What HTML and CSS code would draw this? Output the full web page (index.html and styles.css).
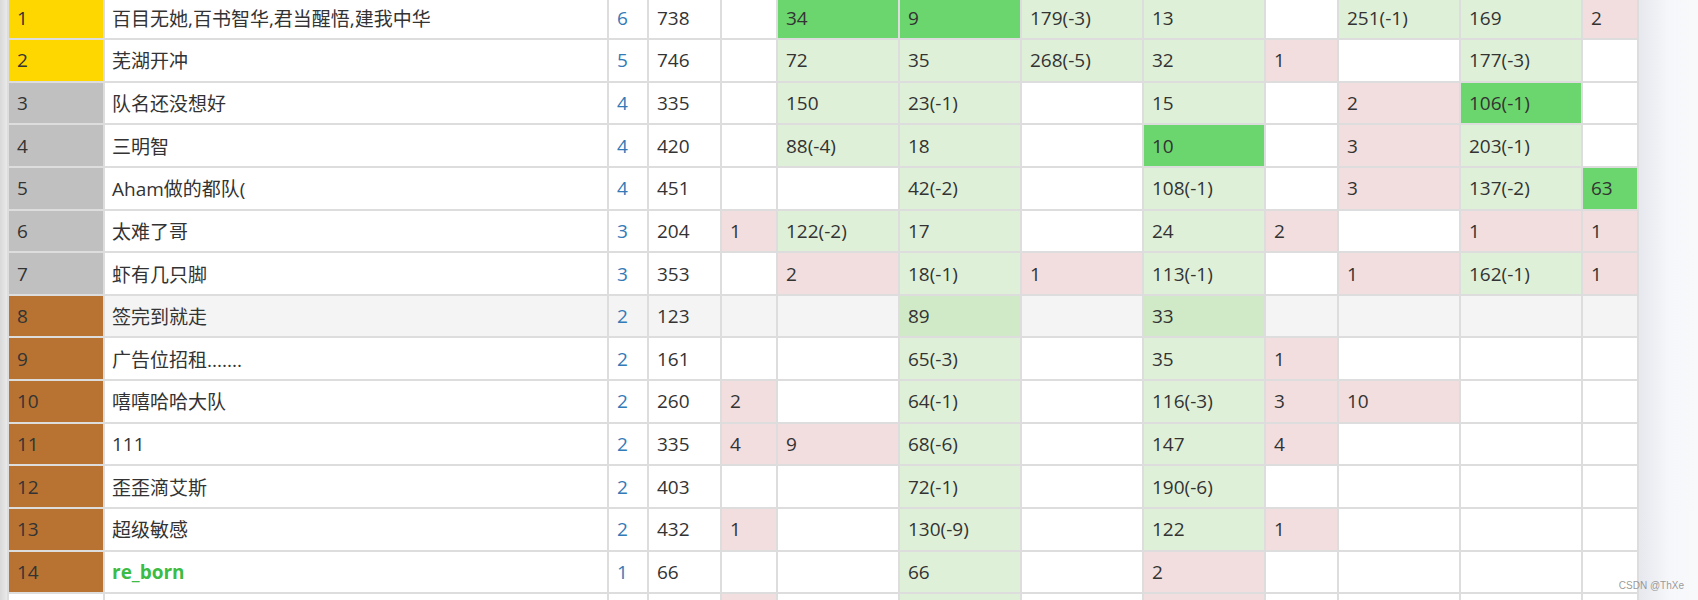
FILE: index.html
```html
<!DOCTYPE html>
<html lang="zh-CN">
<head>
<meta charset="utf-8">
<title>排行榜</title>
<link rel="stylesheet" href="styles.css">
</head>
<body>
<div class="page">
  <div class="board">
    <div class="row">
      <div class="cell gold">1</div><div class="cell name">百目无她,百书智华,君当醒悟,建我中华</div><div class="cell cnt">6</div><div class="cell">738</div>
      <div class="cell"></div><div class="cell fb">34</div><div class="cell fb">9</div><div class="cell ok">179(-3)</div><div class="cell ok">13</div><div class="cell"></div><div class="cell ok">251(-1)</div><div class="cell ok">169</div><div class="cell bad">2</div>
    </div>
    <div class="row">
      <div class="cell gold">2</div><div class="cell name">芜湖开冲</div><div class="cell cnt">5</div><div class="cell">746</div>
      <div class="cell"></div><div class="cell ok">72</div><div class="cell ok">35</div><div class="cell ok">268(-5)</div><div class="cell ok">32</div><div class="cell bad">1</div><div class="cell"></div><div class="cell ok">177(-3)</div><div class="cell"></div>
    </div>
    <div class="row">
      <div class="cell silver">3</div><div class="cell name">队名还没想好</div><div class="cell cnt">4</div><div class="cell">335</div>
      <div class="cell"></div><div class="cell ok">150</div><div class="cell ok">23(-1)</div><div class="cell"></div><div class="cell ok">15</div><div class="cell"></div><div class="cell bad">2</div><div class="cell fb">106(-1)</div><div class="cell"></div>
    </div>
    <div class="row">
      <div class="cell silver">4</div><div class="cell name">三明智</div><div class="cell cnt">4</div><div class="cell">420</div>
      <div class="cell"></div><div class="cell ok">88(-4)</div><div class="cell ok">18</div><div class="cell"></div><div class="cell fb">10</div><div class="cell"></div><div class="cell bad">3</div><div class="cell ok">203(-1)</div><div class="cell"></div>
    </div>
    <div class="row">
      <div class="cell silver">5</div><div class="cell name">Aham做的都队(</div><div class="cell cnt">4</div><div class="cell">451</div>
      <div class="cell"></div><div class="cell"></div><div class="cell ok">42(-2)</div><div class="cell"></div><div class="cell ok">108(-1)</div><div class="cell"></div><div class="cell bad">3</div><div class="cell ok">137(-2)</div><div class="cell fb">63</div>
    </div>
    <div class="row">
      <div class="cell silver">6</div><div class="cell name">太难了哥</div><div class="cell cnt">3</div><div class="cell">204</div>
      <div class="cell bad">1</div><div class="cell ok">122(-2)</div><div class="cell ok">17</div><div class="cell"></div><div class="cell ok">24</div><div class="cell bad">2</div><div class="cell"></div><div class="cell bad">1</div><div class="cell bad">1</div>
    </div>
    <div class="row">
      <div class="cell silver">7</div><div class="cell name">虾有几只脚</div><div class="cell cnt">3</div><div class="cell">353</div>
      <div class="cell"></div><div class="cell bad">2</div><div class="cell ok">18(-1)</div><div class="cell bad">1</div><div class="cell ok">113(-1)</div><div class="cell"></div><div class="cell bad">1</div><div class="cell ok">162(-1)</div><div class="cell bad">1</div>
    </div>
    <div class="row hover">
      <div class="cell bronze">8</div><div class="cell name">签完到就走</div><div class="cell cnt">2</div><div class="cell">123</div>
      <div class="cell"></div><div class="cell"></div><div class="cell ok">89</div><div class="cell"></div><div class="cell ok">33</div><div class="cell"></div><div class="cell"></div><div class="cell"></div><div class="cell"></div>
    </div>
    <div class="row">
      <div class="cell bronze">9</div><div class="cell name">广告位招租.......</div><div class="cell cnt">2</div><div class="cell">161</div>
      <div class="cell"></div><div class="cell"></div><div class="cell ok">65(-3)</div><div class="cell"></div><div class="cell ok">35</div><div class="cell bad">1</div><div class="cell"></div><div class="cell"></div><div class="cell"></div>
    </div>
    <div class="row">
      <div class="cell bronze">10</div><div class="cell name">嘻嘻哈哈大队</div><div class="cell cnt">2</div><div class="cell">260</div>
      <div class="cell bad">2</div><div class="cell"></div><div class="cell ok">64(-1)</div><div class="cell"></div><div class="cell ok">116(-3)</div><div class="cell bad">3</div><div class="cell bad">10</div><div class="cell"></div><div class="cell"></div>
    </div>
    <div class="row">
      <div class="cell bronze">11</div><div class="cell name">111</div><div class="cell cnt">2</div><div class="cell">335</div>
      <div class="cell bad">4</div><div class="cell bad">9</div><div class="cell ok">68(-6)</div><div class="cell"></div><div class="cell ok">147</div><div class="cell bad">4</div><div class="cell"></div><div class="cell"></div><div class="cell"></div>
    </div>
    <div class="row">
      <div class="cell bronze">12</div><div class="cell name">歪歪滴艾斯</div><div class="cell cnt">2</div><div class="cell">403</div>
      <div class="cell"></div><div class="cell"></div><div class="cell ok">72(-1)</div><div class="cell"></div><div class="cell ok">190(-6)</div><div class="cell"></div><div class="cell"></div><div class="cell"></div><div class="cell"></div>
    </div>
    <div class="row">
      <div class="cell bronze">13</div><div class="cell name">超级敏感</div><div class="cell cnt">2</div><div class="cell">432</div>
      <div class="cell bad">1</div><div class="cell"></div><div class="cell ok">130(-9)</div><div class="cell"></div><div class="cell ok">122</div><div class="cell bad">1</div><div class="cell"></div><div class="cell"></div><div class="cell"></div>
    </div>
    <div class="row">
      <div class="cell bronze">14</div><div class="cell name"><span class="special">re_born</span></div><div class="cell cnt">1</div><div class="cell">66</div>
      <div class="cell"></div><div class="cell"></div><div class="cell ok">66</div><div class="cell"></div><div class="cell bad">2</div><div class="cell"></div><div class="cell"></div><div class="cell"></div><div class="cell"></div>
    </div>
    <div class="row">
      <div class="cell"></div><div class="cell name"></div><div class="cell cnt"></div><div class="cell"></div>
      <div class="cell bad"></div><div class="cell"></div><div class="cell ok"></div><div class="cell"></div><div class="cell bad"></div><div class="cell"></div><div class="cell"></div><div class="cell"></div><div class="cell"></div>
    </div>
  </div>
</div>
<div class="watermark">CSDN @ThXe</div>
</body>
</html>
```

FILE: styles.css
```css
html, body {
  margin: 0;
  padding: 0;
  height: 100%;
  overflow: hidden;
}

body {
  background:
    linear-gradient(to right, #d9d9d9 0, #e9e9e9 7px, transparent 7px),
    linear-gradient(to right, transparent 1639px, #e6e8ee 1639px, #f6f7fa 1670px, #f8f9fb 1698px),
    #f8f9fb;
  font-family: "Open Sans", "Noto Sans CJK SC", sans-serif;
  font-size: 19px;
  color: #333333;
  position: relative;
}

.page {
  display: flex;
  padding-left: 7px;
  margin-top: -4.65px;
}

.board {
  display: flex;
  flex-direction: column;
  gap: 2px;
  background: #dddddd;
  border: 2px solid #dddddd;
}

.row {
  display: grid;
  grid-template-columns: 94px 502px 38px 71px 54px 120px 120px 120px 120px 71px 120px 120px 54px;
  column-gap: 2px;
  height: 40.65px;
}

.cell {
  display: flex;
  align-items: center;
  padding-left: 8px;
  background: #ffffff;
  white-space: nowrap;
  overflow: hidden;
}

.name {
  padding-left: 7px;
}

.cnt {
  color: #337ab7;
}

.gold { background: #ffd700; }
.silver { background: #c0c0c0; }
.bronze { background: #b87333; }

.ok { background: #dff0d8; }
.fb { background: #6cd66e; }
.bad { background: #f2dede; }

.hover .cell { background: #f4f4f4; }
.hover .cell.bronze { background: #b87333; }
.hover .cell.ok { background: #d0e9c6; }

.special {
  color: #3cbb45;
  font-weight: 700;
}

.watermark {
  position: absolute;
  right: 14px;
  top: 580px;
  font-family: "Liberation Sans", sans-serif;
  font-size: 10px;
  color: rgba(120, 120, 120, 0.75);
}
```
